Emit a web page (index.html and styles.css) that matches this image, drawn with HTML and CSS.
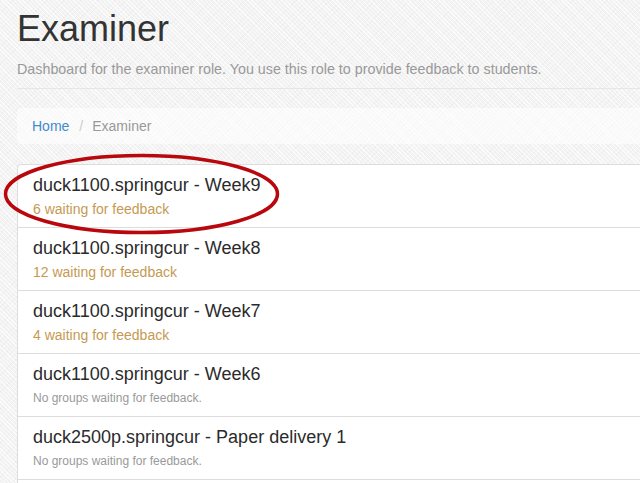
FILE: index.html
```html
<!DOCTYPE html>
<html>
<head>
<meta charset="utf-8">
<title>Examiner</title>
<link rel="stylesheet" href="styles.css">
</head>
<body>
<div class="page">
  <div class="container">
    <header class="page-header">
      <h1 class="title">Examiner</h1>
      <p class="lead">Dashboard for the examiner role. You use this role to provide feedback to students.</p>
    </header>
    <ol class="breadcrumb">
      <li><a href="#">Home</a></li>
      <li class="sep">/</li>
      <li class="active">Examiner</li>
    </ol>
    <div class="list-group">
      <a class="item" href="#">
        <div class="item-title">duck1100.springcur - Week9</div>
        <div class="item-sub waiting">6 waiting for feedback</div>
      </a>
      <a class="item" href="#">
        <div class="item-title">duck1100.springcur - Week8</div>
        <div class="item-sub waiting">12 waiting for feedback</div>
      </a>
      <a class="item" href="#">
        <div class="item-title">duck1100.springcur - Week7</div>
        <div class="item-sub waiting">4 waiting for feedback</div>
      </a>
      <a class="item" href="#">
        <div class="item-title">duck1100.springcur - Week6</div>
        <div class="item-sub none">No groups waiting for feedback.</div>
      </a>
      <a class="item last" href="#">
        <div class="item-title">duck2500p.springcur - Paper delivery 1</div>
        <div class="item-sub none">No groups waiting for feedback.</div>
      </a>
    </div>
  </div>
  <svg class="annotation" width="640" height="483" viewBox="0 0 640 483">
    <ellipse cx="141.5" cy="194" rx="136" ry="38.5" fill="none" stroke="#b8070d" stroke-width="3.5"/>
  </svg>
</div>
</body>
</html>
```

FILE: styles.css
```css
html, body {
  margin: 0;
  padding: 0;
}
body {
  width: 640px;
  height: 483px;
  overflow: hidden;
  font-family: "Liberation Sans", Arial, sans-serif;
  color: #333;
  background-color: #f3f3f3;
  background-image:
    repeating-linear-gradient(45deg, rgba(255,255,255,0.7) 0px, rgba(255,255,255,0.7) 1px, rgba(0,0,0,0) 1px, rgba(0,0,0,0) 3px),
    repeating-linear-gradient(-45deg, rgba(0,0,0,0.025) 0px, rgba(0,0,0,0.025) 1px, rgba(0,0,0,0) 1px, rgba(0,0,0,0) 4px);
}
.page {
  position: relative;
  width: 640px;
  height: 483px;
  overflow: hidden;
}
.container {
  width: 700px;
  padding-left: 17px;
}
.page-header {
  padding-top: 9px;
  padding-bottom: 9px;
  border-bottom: 1px solid #e6e6e6;
  margin-bottom: 19px;
}
.title {
  margin: 0;
  font-size: 36px;
  font-weight: normal;
  line-height: 1.1;
  color: #333;
}
.lead {
  margin: 10px 0 0;
  font-size: 14.3px;
  line-height: 20px;
  color: #999;
}
.breadcrumb {
  list-style: none;
  margin: 0 0 20px;
  padding: 8px 15px;
  display: flex;
  font-size: 14px;
  line-height: 20px;
  background: rgba(255, 255, 255, 0.55);
  border-radius: 4px 0 0 4px;
}
.breadcrumb a {
  color: #428bca;
  text-decoration: none;
}
.breadcrumb .sep {
  color: #ccc;
  padding: 0 9px 0 10px;
}
.breadcrumb .active {
  color: #999;
}
.list-group {
  background: #fff;
  border-left: 1px solid #ddd;
  border-radius: 4px 0 0 0;
  display: flex;
  flex-direction: column;
  padding-bottom: 20px;
}
.item {
  display: block;
  border-top: 1px solid #ddd;
  padding: 10px 15px 8px;
  text-decoration: none;
}
.item.last {
  border-bottom: 1px solid #ddd;
}
.item:first-child {
  border-radius: 4px 0 0 0;
}
.item-title {
  font-size: 18px;
  line-height: 20px;
  color: #2b2b2b;
}
.item-sub {
  margin-top: 4px;
  line-height: 20px;
}
.waiting {
  font-size: 14px;
  color: #c59a52;
}
.none {
  font-size: 12px;
  color: #999;
}
.annotation {
  position: absolute;
  left: 0;
  top: 0;
  pointer-events: none;
}
```
